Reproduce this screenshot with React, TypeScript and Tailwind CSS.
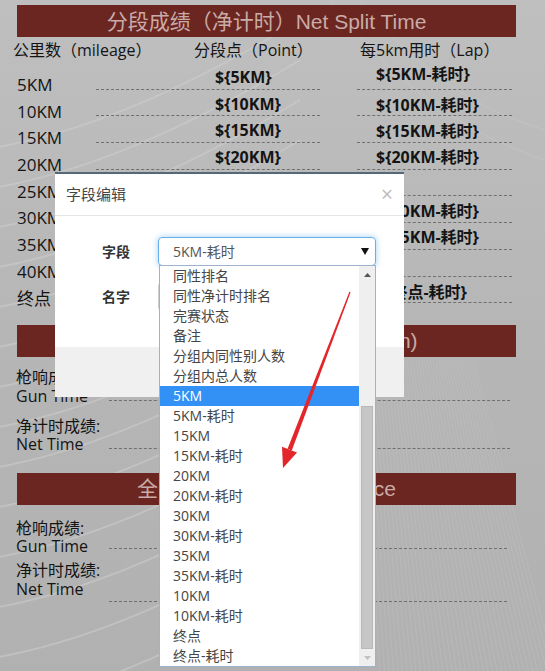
import React from "react";

const rows = [
  { km: "5KM", mid: "${5KM}", lap: "${5KM-耗时}", lapPad: "pt-[1px]" },
  { km: "10KM", mid: "${10KM}", lap: "${10KM-耗时}", lapPad: "pt-[5px]" },
  { km: "15KM", mid: "${15KM}", lap: "${15KM-耗时}", lapPad: "pt-[5px]" },
  { km: "20KM", mid: "${20KM}", lap: "${20KM-耗时}", lapPad: "pt-[4px]" },
  { km: "25KM", mid: "", lap: "", lapPad: "pt-[5px]" },
  { km: "30KM", mid: "", lap: "${30KM-耗时}", lapPad: "pt-[5px]" },
  { km: "35KM", mid: "", lap: "${35KM-耗时}", lapPad: "pt-[4px]" },
  { km: "40KM", mid: "", lap: "", lapPad: "pt-[5px]" },
  { km: "终点", mid: "", lap: "${终点-耗时}", lapPad: "pt-[5px]" },
];

const options = [
  "同性排名",
  "同性净计时排名",
  "完赛状态",
  "备注",
  "分组内同性别人数",
  "分组内总人数",
  "5KM",
  "5KM-耗时",
  "15KM",
  "15KM-耗时",
  "20KM",
  "20KM-耗时",
  "30KM",
  "30KM-耗时",
  "35KM",
  "35KM-耗时",
  "10KM",
  "10KM-耗时",
  "终点",
  "终点-耗时",
];

function Bar({ text, className }: { text: string; className?: string }) {
  return (
    <div
      className={
        "mx-[17px] w-[499px] h-[32px] bg-[#6b2621] flex items-center justify-center text-[21px] leading-none text-[#c9aba7] whitespace-nowrap font-['Liberation_Sans','Noto_Sans_CJK_SC',sans-serif] " +
        (className ?? "")
      }
    >
      {text}
    </div>
  );
}

function TimeRow({
  zh,
  en,
  lead,
  dashH,
  dashEnd,
  className,
}: {
  zh: string;
  en: string;
  lead: string;
  dashH: string;
  dashEnd: string;
  className?: string;
}) {
  return (
    <div className={"flex items-start " + (className ?? "")}>
      <div className={"w-[109px] pl-[16px] text-[16px] whitespace-nowrap " + lead}>
        <div>{zh}</div>
        <div>{en}</div>
      </div>
      <div className={"border-b border-dashed border-[#707070] " + dashH + " " + dashEnd} />
    </div>
  );
}

function Backdrop() {
  const arcs = [150, 190, 230, 270, 310, 350, 390, 430, 470, 510, 560, 610, 660, 710];
  const fan = Array.from({ length: 40 }, (_, i) => 380 + i * 4.5);
  return (
    <svg className="absolute inset-0 pointer-events-none" width="545" height="671" viewBox="0 0 545 671">
      {arcs.map((y) => (
        <path
          key={y}
          d={`M -20 ${y} Q 120 ${y - 20} 300 ${y - 130}`}
          stroke="#cfcfcf"
          strokeOpacity="0.5"
          strokeWidth="2"
          fill="none"
        />
      ))}
      {fan.map((x) => (
        <line
          key={x}
          x1={x}
          y1={671}
          x2={x - (x - 380) * 0.35 - 20}
          y2={360}
          stroke="#c4c4c4"
          strokeOpacity="0.4"
          strokeWidth="1"
        />
      ))}
      <path d="M 330 0 Q 420 120 545 160" stroke="#c6c6c6" strokeOpacity="0.4" strokeWidth="2" fill="none" />
      <path d="M 360 0 Q 440 100 545 130" stroke="#c6c6c6" strokeOpacity="0.4" strokeWidth="2" fill="none" />
    </svg>
  );
}

function RedArrow() {
  return (
    <svg className="absolute inset-0 pointer-events-none" width="545" height="671" viewBox="0 0 545 671">
      <polygon points="350.6,292.2 349.4,291.8 287.6,448.8 291.8,450.6" fill="#e2262b" />
      <polygon points="283,468 282,446.8 297,452.6" fill="#e2262b" />
    </svg>
  );
}

function Tri({ dir, color, w = 7, h = 4 }: { dir: "up" | "down"; color: string; w?: number; h?: number }) {
  return (
    <svg width={w} height={h} viewBox={`0 0 ${w} ${h}`}>
      <polygon points={dir === "up" ? `0,${h} ${w},${h} ${w / 2},0` : `0,0 ${w},0 ${w / 2},${h}`} fill={color} />
    </svg>
  );
}

function FieldModal() {
  return (
    <div className="absolute left-[55px] top-[172px] w-[349px] h-[225px] bg-white border-t-2 border-[#56697a] flex flex-col font-['Open_Sans','Noto_Sans_CJK_SC',sans-serif]">
      <div className="h-[42px] shrink-0 border-b border-[#e5e5e5] flex items-center justify-between pl-[11px] pr-[11px]">
        <span className="text-[15px] text-[#454545]">字段编辑</span>
        <span className="text-[21px] leading-none text-[#bcbcbc]">×</span>
      </div>
      <div className="flex-1 flex flex-col pt-[21px] gap-[16px]">
        <div className="flex items-center h-[29px]">
          <span className="w-[103px] pl-[47px] text-[14px] font-semibold text-[#333]">字段</span>
          <div className="relative">
            <div className="w-[218px] h-[29px] rounded-[4px] border border-[#66afe9] shadow-[0_0_6px_rgba(102,175,233,0.6)] flex items-center justify-between pl-[14px] pr-[6px]">
              <span className="text-[14px] text-[#555]">5KM-耗时</span>
              <Tri dir="down" color="#111" w={8} h={7} />
            </div>
            <div className="absolute left-[1px] top-[28px] w-[217px] h-[402px] bg-white border border-[#9db2cc] flex">
              <div className="flex-1 flex flex-col">
                {options.map((o) => (
                  <div
                    key={o}
                    className={
                      "h-[20px] leading-[20px] pl-[13px] text-[14px] whitespace-nowrap " +
                      (o === "5KM" ? "bg-[#3390f5] text-white" : "text-[#454545]")
                    }
                  >
                    {o}
                  </div>
                ))}
              </div>
              <div className="w-[16px] bg-[#efefef] flex flex-col items-center">
                <div className="h-[17px] flex items-center justify-center">
                  <Tri dir="up" color="#555" />
                </div>
                <div className="flex-1" />
                <div className="w-[12px] h-[243px] bg-[#c6c6c6] border border-[#b9b9b9]" />
                <div className="h-[17px] flex items-center justify-center">
                  <Tri dir="down" color="#c0c0c0" />
                </div>
              </div>
            </div>
          </div>
        </div>
        <div className="flex items-center h-[29px]">
          <span className="w-[103px] pl-[47px] text-[14px] font-semibold text-[#333]">名字</span>
          <div className="w-[218px] h-[29px] rounded-[4px] border border-[#ccc]" />
        </div>
      </div>
      <div className="h-[50px] shrink-0 bg-[#f0f0f0]" />
    </div>
  );
}

export default function App() {
  return (
    <div className="relative w-[545px] h-[671px] overflow-hidden bg-gradient-to-b from-[#bfbfbf] via-[#b6b6b6] to-[#b1b1b1] text-[#141414] font-['Open_Sans','Noto_Sans_CJK_SC',sans-serif]">
      <Backdrop />
      <div className="relative flex flex-col pt-[5px]">
        <Bar text="分段成绩（净计时）Net Split Time" />

        <div className="flex h-[26px] items-center text-[16px] whitespace-nowrap">
          <span className="w-[194px] pl-[13px]">公里数（mileage）</span>
          <span className="w-[166px]">分段点（Point）</span>
          <span>每5km用时（Lap）</span>
        </div>

        {rows.map((r) => (
          <div key={r.km} className="flex h-[26.7px] whitespace-nowrap">
            <div className="w-[96px] shrink-0 pl-[17px] pt-[12px] leading-[20px] text-[17px]">{r.km}</div>
            <div className="w-[224px] shrink-0 border-b border-dashed border-[#707070] pl-[119px] pt-[4px] leading-[20px] text-[16px] font-bold">
              {r.mid}
            </div>
            <div className="w-[37px] shrink-0" />
            <div
              className={
                "w-[155px] shrink-0 border-b border-dashed border-[#707070] pl-[19px] leading-[20px] text-[16px] font-bold " +
                r.lapPad
              }
            >
              {r.lap}
            </div>
          </div>
        ))}

        <Bar text="成绩（枪声计时）(Gun Position)" className="mt-[21.4px] h-[31px]" />

        <TimeRow
          zh="枪响成绩:"
          en="Gun Time"
          lead="leading-[19px]"
          dashH="h-[32.5px]"
          dashEnd="w-[401px]"
          className="mt-[11.5px]"
        />
        <TimeRow
          zh="净计时成绩:"
          en="Net Time"
          lead="leading-[18px]"
          dashH="h-[32px]"
          dashEnd="w-[401px]"
          className="mt-[10.5px]"
        />

        <Bar text="全部成绩（枪声计时）Race" className="mt-[20px] h-[31px]" />

        <TimeRow
          zh="枪响成绩:"
          en="Gun Time"
          lead="leading-[18px]"
          dashH="h-[30px]"
          dashEnd="w-[398px]"
          className="mt-[14px]"
        />
        <TimeRow
          zh="净计时成绩:"
          en="Net Time"
          lead="leading-[19px]"
          dashH="h-[40.5px]"
          dashEnd="w-[398px]"
          className="mt-[6.5px]"
        />
      </div>

      <FieldModal />
      <RedArrow />
    </div>
  );
}
